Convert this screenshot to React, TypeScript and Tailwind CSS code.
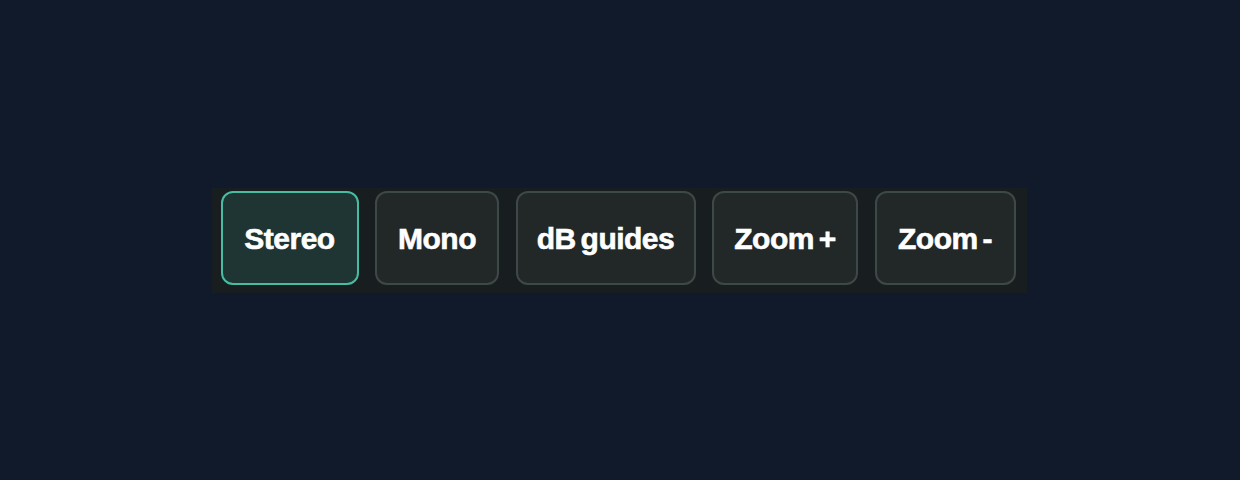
const modes = [
  { label: 'Stereo', active: true, w: 'w-[138px]' },
  { label: 'Mono', active: false, w: 'w-[124px]' },
  { label: 'dB guides', active: false, w: 'w-[180px]' },
  { label: 'Zoom +', active: false, w: 'w-[146px]' },
  { label: 'Zoom -', active: false, w: 'w-[141px]' },
]

export default function App() {
  return (
    <div className="w-full h-[480px] bg-[#111a2a] flex items-center justify-center font-['Liberation_Sans',Arial,sans-serif]">
      <div className="flex items-center gap-[16.5px] bg-[#181d1f] pl-[9px] pr-[11px] pt-[3px] pb-[8px] mr-[2px]">
        {modes.map((m) => (
          <button
            key={m.label}
            className={`${m.w} h-[94px] rounded-[12px] border-2 flex items-center justify-center pt-[2px] text-[30px] font-bold tracking-[-0.5px] [word-spacing:-3px] [-webkit-text-stroke:0.6px_white] text-white ${
              m.active ? 'bg-[#1e3533] border-[#48bca2]' : 'bg-[#222827] border-[#3d4847]'
            }`}
          >
            {m.label}
          </button>
        ))}
      </div>
    </div>
  )
}
